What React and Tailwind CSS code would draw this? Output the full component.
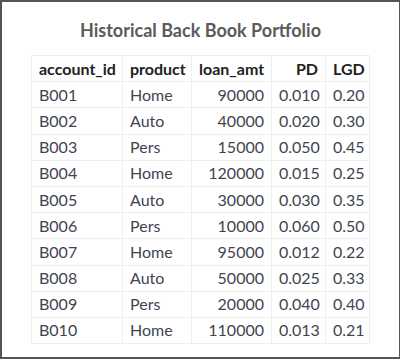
const rows = [
  ['B001', 'Home', '90000', '0.010', '0.20'],
  ['B002', 'Auto', '40000', '0.020', '0.30'],
  ['B003', 'Pers', '15000', '0.050', '0.45'],
  ['B004', 'Home', '120000', '0.015', '0.25'],
  ['B005', 'Auto', '30000', '0.030', '0.35'],
  ['B006', 'Pers', '10000', '0.060', '0.50'],
  ['B007', 'Home', '95000', '0.012', '0.22'],
  ['B008', 'Auto', '50000', '0.025', '0.33'],
  ['B009', 'Pers', '20000', '0.040', '0.40'],
  ['B010', 'Home', '110000', '0.013', '0.21'],
]

const cell = 'border border-[#eeeeee] px-[7px] h-[26.2px] py-0 leading-[18px] whitespace-nowrap'

export default function App() {
  return (
    <div
      className="w-[400px] h-[359px] bg-white border-l-2 border-t-2 border-b-2 border-r border-[#555555] flex flex-col items-center"
      style={{ fontFamily: 'Lato, "Open Sans", sans-serif' }}
    >
      <h1 className="mt-[17px] text-[18px] font-bold text-[#5b5b5b] leading-[22px]">
        Historical Back Book Portfolio
      </h1>
      <table className="mt-[14px] w-[338px] table-fixed border-collapse text-[16px] text-[#3f4550]">
        <colgroup>
          <col className="w-[91px]" />
          <col className="w-[69px]" />
          <col className="w-[80px]" />
          <col className="w-[54px]" />
          <col className="w-[44px]" />
        </colgroup>
        <thead>
          <tr className="text-[#222222] font-bold">
            <th className={`${cell} text-left`}>account_id</th>
            <th className={`${cell} text-left`}>product</th>
            <th className={`${cell} text-left`}>loan_amt</th>
            <th className={`${cell} text-right`}>PD</th>
            <th className={`${cell} text-left`}>LGD</th>
          </tr>
        </thead>
        <tbody>
          {rows.map((r) => (
            <tr key={r[0]}>
              <td className={`${cell} text-left`}>{r[0]}</td>
              <td className={`${cell} text-left`}>{r[1]}</td>
              <td className={`${cell} text-right`}>{r[2]}</td>
              <td className={`${cell} text-right`}>{r[3]}</td>
              <td className={`${cell} text-right`}>{r[4]}</td>
            </tr>
          ))}
        </tbody>
      </table>
    </div>
  )
}
